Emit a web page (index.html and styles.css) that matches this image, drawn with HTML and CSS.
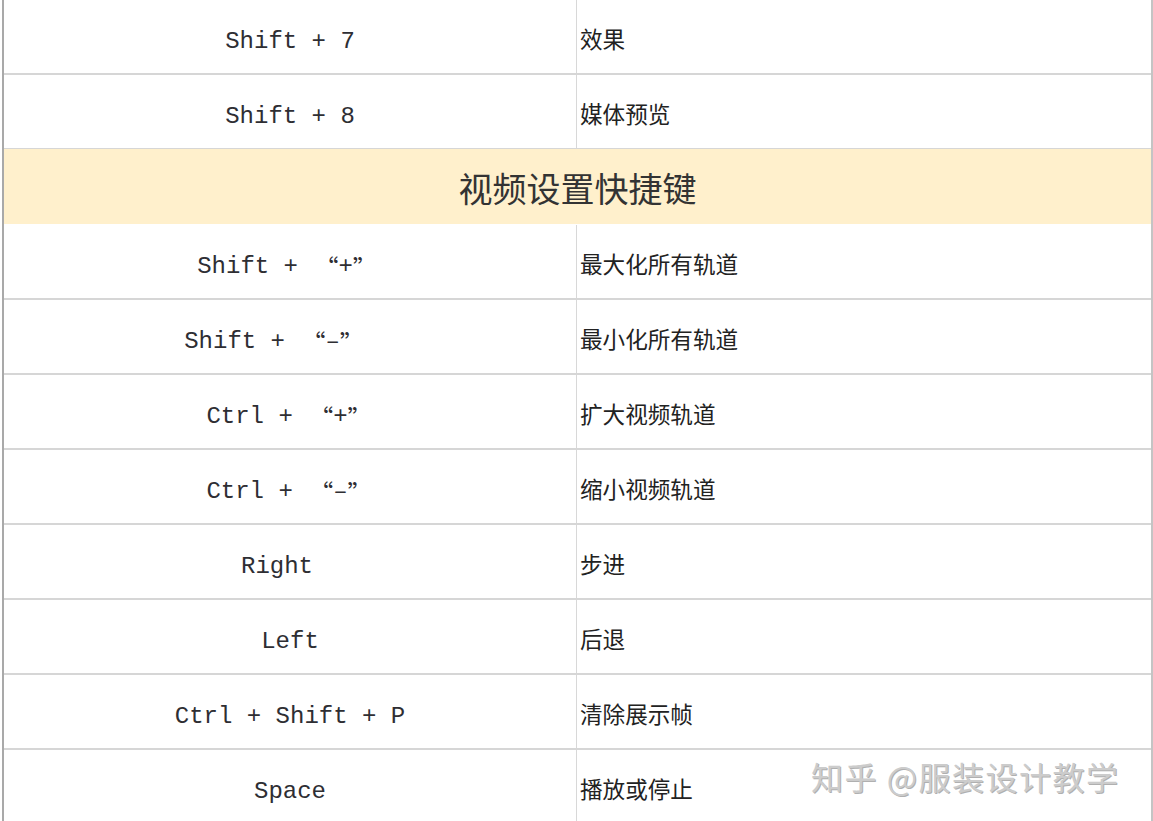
FILE: index.html
```html
<!DOCTYPE html>
<html lang="zh-CN">
<head>
<meta charset="utf-8">
<title>快捷键</title>
<link rel="stylesheet" href="styles.css">
</head>
<body>
<div class="sheet">
  <div class="row"><div class="key">Shift + 7</div><div class="desc">效果</div></div>
  <div class="row"><div class="key">Shift + 8</div><div class="desc">媒体预览</div></div>
  <div class="head">视频设置快捷键</div>
  <div class="row"><div class="key shift-plus">Shift + <span class="q ql">“</span>+<span class="q qr">”</span></div><div class="desc">最大化所有轨道</div></div>
  <div class="row"><div class="key shift-minus">Shift + <span class="q ql">“</span>–<span class="q qr">”</span></div><div class="desc">最小化所有轨道</div></div>
  <div class="row"><div class="key">Ctrl + <span class="q ql">“</span>+<span class="q qr">”</span></div><div class="desc">扩大视频轨道</div></div>
  <div class="row"><div class="key">Ctrl + <span class="q ql">“</span>–<span class="q qr">”</span></div><div class="desc">缩小视频轨道</div></div>
  <div class="row"><div class="key right-key">Right</div><div class="desc">步进</div></div>
  <div class="row"><div class="key">Left</div><div class="desc">后退</div></div>
  <div class="row"><div class="key">Ctrl + Shift + P</div><div class="desc">清除展示帧</div></div>
  <div class="row"><div class="key">Space</div><div class="desc">播放或停止</div></div>
</div>
<div class="watermark">知乎 @服装设计教学</div>
</body>
</html>
```

FILE: styles.css
```css
html, body {
  margin: 0;
  padding: 0;
  background: #ffffff;
  overflow: hidden;
}
body {
  width: 1153px;
  height: 821px;
  position: relative;
}
.sheet {
  margin-left: 2px;
  width: 1147px;
  border-left: 2px solid #a9a9a9;
  border-right: 2px solid #c4c4c4;
  display: flex;
  flex-direction: column;
}
.row {
  display: grid;
  grid-template-columns: 573px 1fr;
  height: 75px;
  box-sizing: border-box;
  border-bottom: 2px solid #d6d6d6;
}
.key {
  display: flex;
  align-items: center;
  justify-content: center;
  padding-top: 10px;
  font-family: "Liberation Mono", "DejaVu Sans Mono", monospace;
  font-size: 24px;
  color: #2e2e33;
  white-space: pre;
  border-right: 1px solid #d8d8d8;
}
.shift-plus {
  padding-right: 4px;
}
.shift-minus {
  padding-right: 30px;
}
.right-key {
  padding-right: 26px;
}
.q {
  font-family: "Noto Sans CJK SC", sans-serif;
  font-size: 24px;
  display: inline-block;
  width: 26px;
}
.ql {
  text-align: right;
}
.qr {
  text-align: left;
}
.desc {
  display: flex;
  align-items: center;
  padding-left: 3px;
  padding-top: 3px;
  font-family: "Noto Sans CJK SC", sans-serif;
  font-size: 22.6px;
  color: #222222;
}
.head {
  height: 75px;
  margin-top: -1px;
  margin-bottom: 1px;
  background: #fff0cc;
  display: flex;
  align-items: center;
  justify-content: center;
  padding-top: 2px;
  box-sizing: border-box;
  font-family: "Noto Sans CJK SC", sans-serif;
  font-size: 34px;
  color: #333333;
}
.watermark {
  position: absolute;
  left: 811px;
  top: 753px;
  font-family: "Noto Sans CJK SC", sans-serif;
  font-size: 32px;
  letter-spacing: 1.5px;
  color: #cccccc;
  text-shadow: 1px 1px 0 #b0b0b0;
  white-space: nowrap;
}
```
